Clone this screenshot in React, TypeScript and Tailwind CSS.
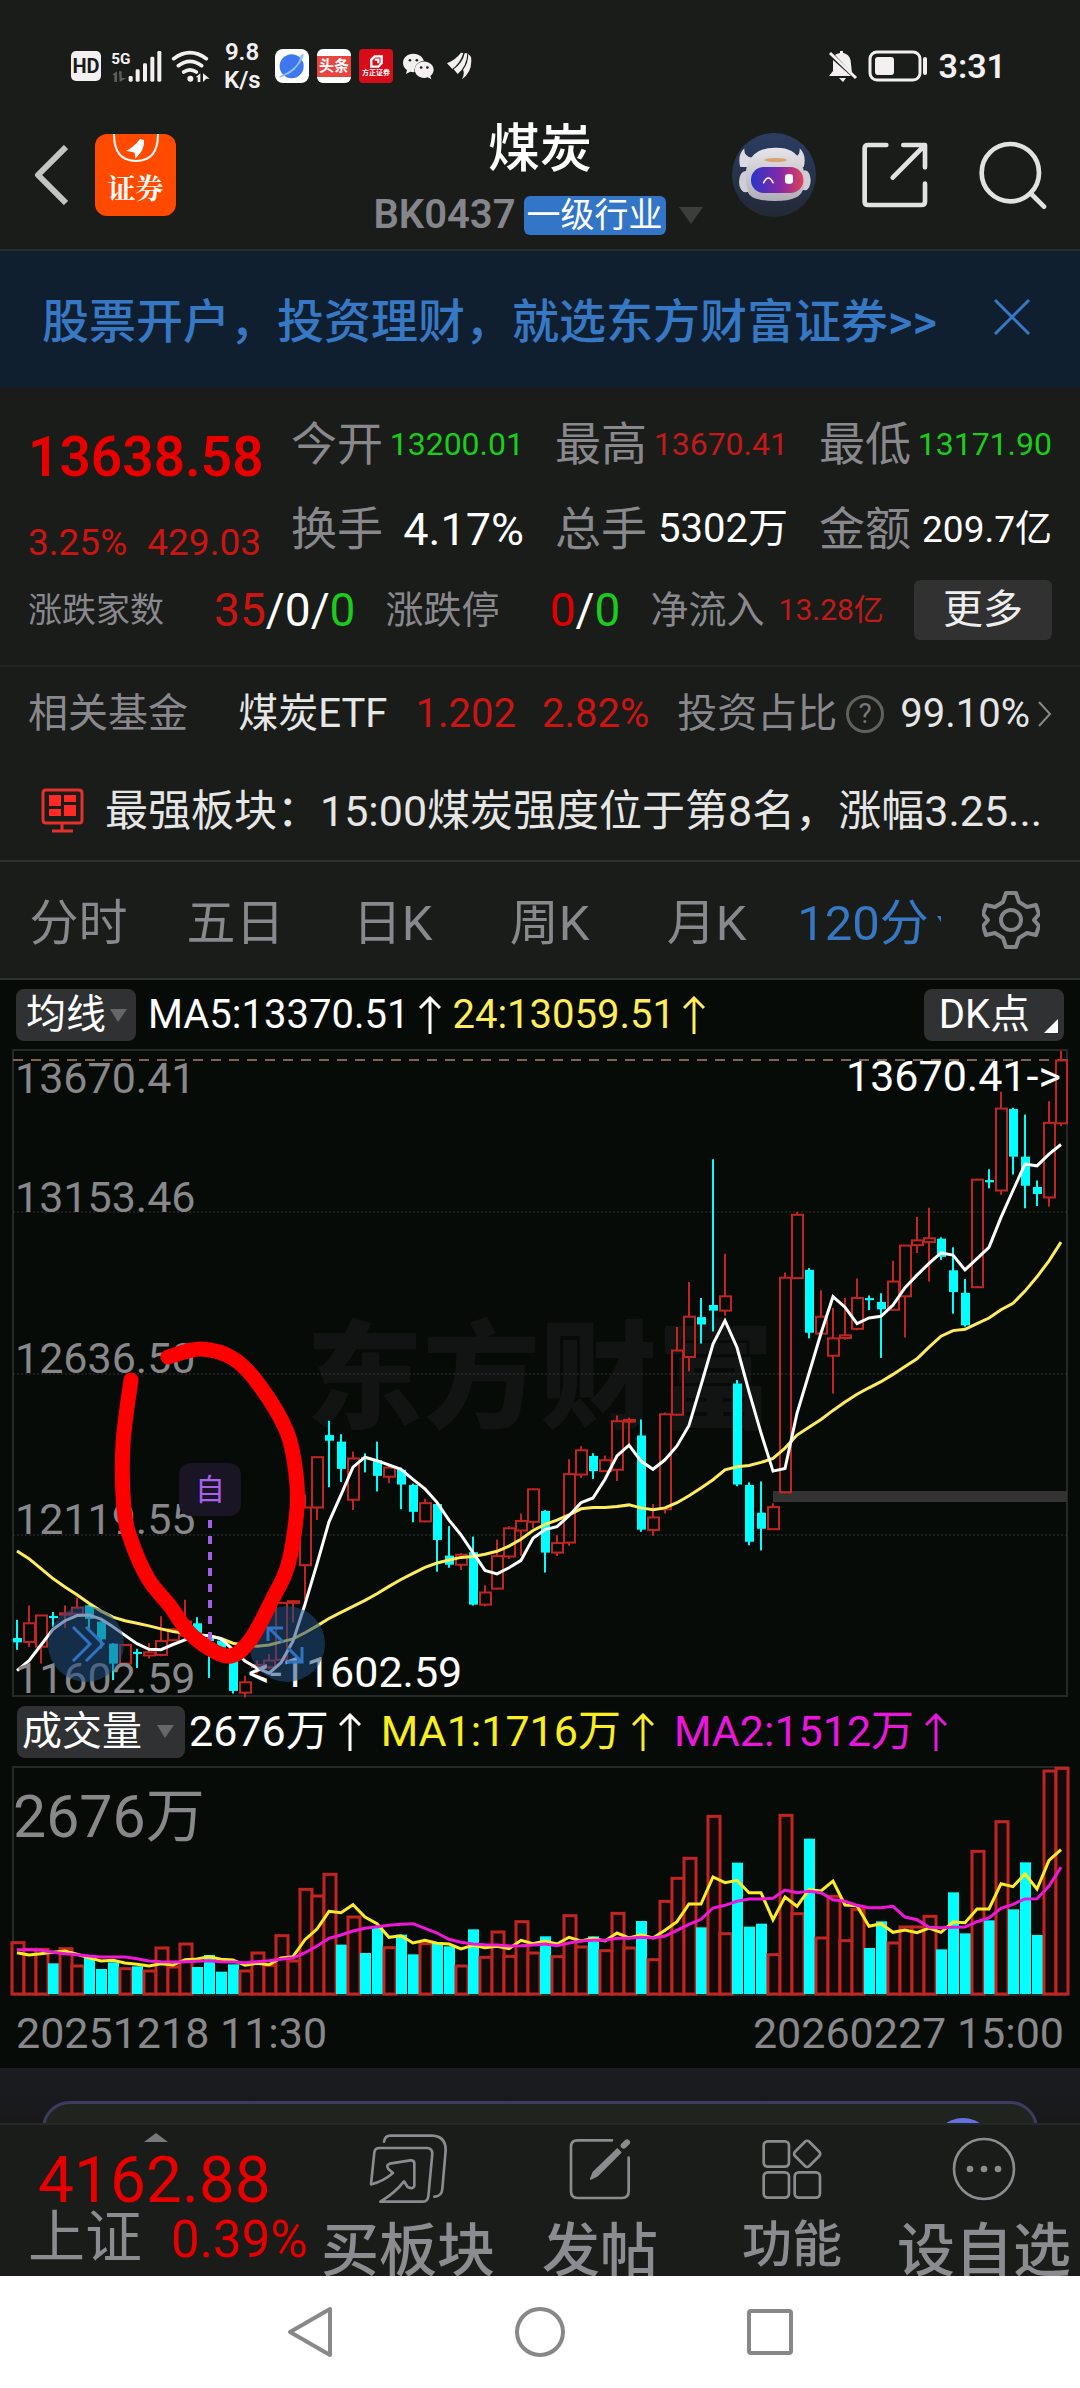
import React from "react";

type Candle = [0 | 1, number, number, number, number];

/* Each candle: rising flag, high, body top, body bottom, low (depth below the chart's top, in price ticks). */
const CANDLES: Candle[] = [
  [0, 1336, 1378, 1388, 1405], [1, 1303, 1344, 1387, 1398], [1, 1326, 1326, 1398, 1437], [0, 1318, 1327, 1332, 1352],
  [1, 1303, 1321, 1324, 1355], [1, 1285, 1308, 1322, 1325], [0, 1303, 1303, 1334, 1360], [0, 1340, 1340, 1381, 1402],
  [0, 1390, 1391, 1437, 1475], [1, 1393, 1394, 1437, 1437], [0, 1403, 1410, 1414, 1447], [1, 1390, 1411, 1418, 1425],
  [1, 1328, 1385, 1417, 1420], [1, 1355, 1358, 1383, 1385], [1, 1290, 1340, 1372, 1380], [0, 1330, 1344, 1366, 1370],
  [0, 1370, 1378, 1385, 1470], [0, 1380, 1384, 1400, 1405], [0, 1410, 1420, 1500, 1506], [1, 1465, 1480, 1504, 1515],
  [1, 1430, 1440, 1445, 1460], [1, 1415, 1430, 1445, 1450], [1, 1295, 1297, 1428, 1430], [1, 1292, 1293, 1297, 1342],
  [1, 1047, 1077, 1210, 1290], [1, 960, 961, 1077, 1106], [0, 877, 910, 923, 1030], [0, 908, 925, 988, 1018],
  [1, 948, 964, 1059, 1083], [0, 952, 961, 965, 996], [0, 925, 968, 1004, 1040], [1, 978, 985, 1006, 1021],
  [0, 985, 990, 1024, 1081], [0, 1022, 1025, 1087, 1111], [1, 1057, 1067, 1109, 1111], [0, 1066, 1069, 1152, 1225],
  [0, 1120, 1188, 1209, 1216], [1, 1182, 1186, 1209, 1221], [0, 1144, 1180, 1301, 1303], [1, 1256, 1273, 1301, 1305],
  [1, 1151, 1189, 1264, 1266], [1, 1120, 1125, 1190, 1196], [1, 1091, 1108, 1130, 1188], [1, 1033, 1035, 1110, 1125],
  [0, 1083, 1085, 1181, 1227], [1, 1141, 1159, 1181, 1189], [1, 966, 1000, 1158, 1165], [1, 936, 945, 1001, 1009],
  [0, 952, 958, 993, 1011], [1, 957, 968, 993, 995], [1, 865, 878, 990, 1016], [1, 870, 875, 879, 940],
  [0, 874, 911, 1128, 1133], [1, 1069, 1100, 1129, 1142], [1, 858, 862, 1081, 1091], [1, 661, 715, 863, 865],
  [1, 557, 637, 730, 763], [0, 594, 638, 655, 699], [0, 274, 610, 623, 671], [1, 492, 590, 623, 635],
  [0, 783, 791, 1024, 1028], [0, 1019, 1025, 1156, 1164], [0, 1017, 1089, 1126, 1176], [1, 1067, 1076, 1127, 1129],
  [1, 535, 547, 1042, 1044], [1, 395, 402, 548, 550], [0, 525, 529, 674, 687], [1, 576, 637, 676, 680],
  [1, 617, 687, 727, 814], [1, 594, 680, 686, 690], [1, 549, 594, 665, 668], [0, 588, 594, 599, 622],
  [0, 583, 603, 620, 732], [1, 508, 556, 621, 623], [1, 472, 473, 590, 685], [1, 407, 461, 472, 490],
  [1, 386, 456, 465, 556], [0, 454, 457, 499, 506], [0, 477, 530, 580, 630], [0, 550, 582, 657, 660],
  [1, 319, 321, 569, 571], [0, 297, 322, 327, 341], [1, 118, 157, 346, 356], [0, 155, 158, 268, 309],
  [0, 171, 268, 335, 387], [0, 323, 338, 354, 382], [1, 140, 190, 362, 383], [1, 24, 46, 191, 198],
];

const MA5 = [
  1453, 1430, 1394, 1358, 1338, 1326, 1325, 1334, 1352, 1372, 1391, 1404, 1405, 1393, 1382, 1372, 1372, 1380, 1405, 1431,
  1447, 1459, 1435, 1385, 1300, 1207, 1110, 1048, 984, 961, 969, 979, 989, 1012, 1034, 1065, 1106, 1140, 1181, 1222,
  1230, 1216, 1199, 1148, 1128, 1121, 1096, 1066, 1055, 1012, 958, 933, 970, 989, 967, 935, 888, 795, 700, 646,
  708, 810, 905, 993, 987, 860, 768, 675, 591, 615, 653, 640, 636, 610, 570, 541, 514, 490, 495, 529,
  503, 477, 408, 346, 285, 289, 262, 240,
];

const MA24 = [
  1177, 1195, 1218, 1241, 1260, 1278, 1298, 1316, 1330, 1338, 1344, 1350, 1357, 1363, 1367, 1370, 1373, 1379, 1390, 1395,
  1397, 1394, 1387, 1380, 1366, 1350, 1333, 1319, 1305, 1291, 1276, 1259, 1243, 1229, 1215, 1205, 1198, 1192, 1190, 1185,
  1178, 1166, 1150, 1130, 1116, 1106, 1094, 1080, 1077, 1077, 1075, 1071, 1078, 1082, 1078, 1066, 1050, 1032, 1013, 990,
  983, 980, 973, 964, 940, 910, 892, 874, 853, 834, 816, 801, 787, 770, 752, 734, 707, 682, 669, 666,
  653, 640, 621, 606, 578, 545, 508, 465,
];

/* Top of each volume bar, in thirds of a unit below the header. */
const VOLUME = [
  727, 747, 747, 789, 745, 797, 772, 806, 786, 805, 798, 812, 743, 800, 731, 800, 764, 814, 792, 812,
  758, 795, 706, 782, 567, 587, 522, 733, 650, 758, 680, 742, 703, 762, 730, 728, 738, 797, 687, 771,
  695, 768, 664, 758, 708, 769, 646, 740, 708, 751, 639, 743, 662, 778, 603, 534, 474, 681, 348, 700,
  487, 679, 670, 763, 345, 640, 415, 713, 588, 721, 627, 743, 663, 728, 680, 680, 648, 747, 576, 699,
  453, 660, 364, 627, 486, 704, 212, 204,
];
/* Bars drawn hollow although their candle is solid. */
const VOLUME_RISING = new Set([0, 26, 58]);

const VMA1 = [
  757, 764, 760, 756, 752, 762, 772, 782, 780, 788, 792, 797, 790, 794, 778, 776, 769, 777, 779, 795,
  789, 793, 773, 769, 718, 686, 633, 637, 613, 650, 670, 711, 706, 728, 720, 729, 731, 746, 735, 742,
  738, 745, 720, 730, 722, 731, 711, 722, 714, 722, 698, 713, 703, 713, 690, 664, 611, 611, 530, 547,
  540, 577, 577, 658, 590, 618, 568, 572, 542, 614, 616, 678, 670, 696, 689, 697, 683, 696, 665, 667,
  626, 626, 550, 559, 520, 566, 480, 448,
];

const VMA2 = [
  748, 748, 750, 756, 760, 763, 767, 770, 770, 770, 775, 782, 784, 785, 784, 783, 781, 784, 785, 787,
  784, 781, 777, 773, 757, 737, 714, 704, 692, 684, 679, 675, 672, 670, 684, 698, 717, 726, 731, 733,
  734, 737, 736, 734, 731, 736, 728, 722, 720, 720, 714, 714, 711, 713, 707, 690, 672, 657, 623, 615,
  603, 596, 596, 594, 569, 577, 573, 577, 598, 603, 615, 622, 622, 618, 650, 658, 681, 682, 681, 680,
  664, 653, 624, 612, 596, 595, 557, 501,
];

const FREEHAND: [number, number][] = [
  [155, 307], [188, 299], [221, 309], [247, 336], [274, 382], [283, 424], [284, 459], [275, 515], [259, 550], [238, 589],
  [218, 606], [194, 597], [174, 580], [157, 556], [136, 530], [119, 493], [111, 459], [110, 394], [118, 330],
];

const cx = (i: number) => 4 + i * 12;
const priceY = (v: number) => (v - 22) / 2.306;
const volumeY = (v: number) => (v - 200) / 3;
const line = (values: number[], toY: (v: number) => number) =>
  values.map((v, i) => `${cx(i)},${toY(v).toFixed(1)}`).join(" ");

function smooth(p: [number, number][]) {
  let d = `M${p[0][0]} ${p[0][1]}`;
  for (let i = 0; i < p.length - 1; i++) {
    const a = p[Math.max(0, i - 1)];
    const b = p[i];
    const c = p[i + 1];
    const e = p[Math.min(p.length - 1, i + 2)];
    d += ` C${b[0] + (c[0] - a[0]) / 6} ${b[1] + (c[1] - a[1]) / 6} ${c[0] - (e[0] - b[0]) / 6} ${c[1] - (e[1] - b[1]) / 6} ${c[0]} ${c[1]}`;
  }
  return d;
}

const RED = "#c22420";
const CYAN = "#00ffff";

function StatusBar() {
  return (
    <div className="flex h-[120px] items-center pt-3 pr-[74px] pl-[71px] text-[#f4f0f2]">
      <span className="flex size-[30px] items-center justify-center rounded-[5px] bg-[#f4f0f2] text-[20px] leading-none font-bold text-[#191c19]">HD</span>
      <svg className="ml-[10px] h-8 w-[51px]" viewBox="153 56 153 96" fill="currentColor">
        <text x="154" y="99" fontSize="46" fontWeight="700">5G</text>
        <path d="M157 130l14-10v32h-8v-20zM177 120h8v20h14l-20 12z" fill="#5b5d5b" />
        <rect x="206" y="134" width="12" height="17" rx="4" />
        <rect x="227" y="114" width="12" height="37" rx="4" />
        <rect x="249" y="96" width="12" height="55" rx="4" />
        <rect x="271" y="76" width="12" height="75" rx="4" />
        <rect x="292" y="59" width="12" height="92" rx="4" />
      </svg>
      <svg className="ml-[9px] h-8 w-[39px]" viewBox="330 56 117 96" fill="none" stroke="currentColor" strokeWidth="11" strokeLinecap="round">
        <path d="M338 82q49-36 98 0M352 103q35-26 70 0M368 122q19-13 38 0" />
        <circle cx="388" cy="142" r="9" fill="currentColor" stroke="none" />
        <path d="M404 138l14-12v26h-8v-14zM426 126l20 16h-10l-10 10z" fill="currentColor" stroke="none" />
      </svg>
      <span className="ml-[14px] w-[36px] text-center text-[24px] leading-[28px] font-semibold">9.8 K/s</span>
      <svg className="ml-[15px] size-[34px]" viewBox="0 0 102 102">
        <rect width="102" height="102" rx="24" fill="#fff" />
        <circle cx="50" cy="52" r="36" fill="#3f78ee" />
        <path d="M16 80Q8 88 20 84Q64 70 84 26Q90 8 76 20Q72 56 16 80z" fill="#8fc1fb" />
      </svg>
      <span className="ml-2 flex size-[34px] flex-col justify-center overflow-hidden rounded-[6px] bg-white">
        <span className="bg-[#e8453f] text-center text-[15px] leading-[21px] font-bold text-white">头条</span>
      </span>
      <span className="ml-2 flex size-[34px] flex-col items-center justify-end rounded-[4px] bg-[#d70c19] pb-1">
        <svg className="h-[13px] w-[13px]" viewBox="0 0 39 39" fill="none" stroke="#fff" strokeWidth="7">
          <path d="M4 14L14 4h21v20L25 35H4zM14 14h11v11" />
        </svg>
        <span className="text-[7px] leading-[11px] font-bold whitespace-nowrap text-white">方正证券</span>
      </span>
      <svg className="ml-[10px] h-[27px] w-[31px]" viewBox="1028 66 94 82" fill="currentColor">
        <path d="M1059 68c-18 0-31 12-31 28 0 9 5 17 12 22l-3 12 13-7c5 1 9 2 13 1-2-20 11-33 28-34-3-13-16-22-32-22z" />
        <path d="M1092 92c-16 0-28 11-28 25s12 25 28 25c4 0 8-1 11-2l11 6-3-10c6-5 10-11 10-19 0-14-13-25-29-25z" />
        <g fill="#191c19"><circle cx="1049" cy="88" r="4" /><circle cx="1070" cy="88" r="4" /><circle cx="1083" cy="110" r="4" /><circle cx="1102" cy="110" r="4" /></g>
      </svg>
      <svg className="ml-[13px] h-[28px] w-[25px]" viewBox="1164 65 75 84" fill="currentColor">
        <path d="M1164 99Q1190 88 1206 67L1213 68Q1204 98 1180 116zM1184 117Q1211 98 1217 69L1225 69Q1224 108 1196 131zM1209 147Q1218 128 1212 119Q1228 98 1228 70L1236 80Q1242 122 1209 147z" />
      </svg>
      <svg className="ml-auto size-[32px]" viewBox="0 0 32 32" fill="currentColor">
        <path d="M8 5Q9 4 13 3V1h3v2c6 1 8 6 8 11l1 9zM6 10l18 16H2l4-5zM12 28h7l-3 4z" />
        <path d="M3 3l26 25" stroke="currentColor" strokeWidth="3" />
      </svg>
      <svg className="ml-[9px] h-8 w-[60px]" viewBox="0 0 60 32" fill="none" stroke="currentColor" strokeWidth="3">
        <rect x="2" y="2" width="50" height="28" rx="7" />
        <rect x="7" y="7" width="19" height="18" rx="3" fill="currentColor" stroke="none" />
        <path d="M57 9v14" strokeLinecap="round" strokeWidth="4" />
      </svg>
      <span className="ml-[10px] text-[34px] leading-none font-semibold">3:31</span>
    </div>
  );
}

function Robot() {
  return (
    <svg className="size-[84px]" viewBox="39 38 252 252">
      <defs>
        <linearGradient id="night" x1="0" y1="0" x2="0" y2="1"><stop offset="0" stopColor="#2b3d63" /><stop offset="1" stopColor="#222935" /></linearGradient>
        <linearGradient id="visor" x1="0" y1="0" x2="1" y2="0"><stop offset="0" stopColor="#2b35c8" /><stop offset="0.55" stopColor="#8428a6" /><stop offset="1" stopColor="#e0405c" /></linearGradient>
        <linearGradient id="shell" x1="0" y1="0" x2="0" y2="1"><stop offset="0" stopColor="#e6e5e9" /><stop offset="1" stopColor="#b0adb6" /></linearGradient>
      </defs>
      <circle cx="165" cy="164" r="126" fill="url(#night)" />
      <path d="M76 84Q54 106 64 140L86 140L98 112Q74 108 76 84zM242 84Q264 106 254 140L234 140L222 112Q244 108 242 84z" fill="#dcdae1" />
      <ellipse cx="80" cy="184" rx="20" ry="32" fill="#cfcdd5" />
      <ellipse cx="258" cy="180" rx="17" ry="30" fill="#cfcdd5" />
      <path d="M86 130Q106 82 168 82Q226 80 244 122Q262 156 254 200Q250 242 168 242Q92 242 86 212Q74 160 86 130z" fill="url(#shell)" />
      <rect x="96" y="140" width="157" height="78" rx="38" fill="url(#visor)" />
      <path d="M134 187q14-28 28 0" fill="none" stroke="#fff" strokeWidth="5" strokeLinecap="round" />
      <rect x="198" y="162" width="24" height="28" rx="7" fill="#fff" />
      <ellipse cx="170" cy="119" rx="34" ry="6" fill="#d9a270" />
    </svg>
  );
}

function Header() {
  return (
    <header className="grid h-[131px] grid-cols-[1fr_auto_1fr] border-b-2 border-[#273131]">
      <div className="flex items-center pb-5 pl-[34px]">
        <button aria-label="返回" className="h-[60px] w-[34px]">
          <svg viewBox="0 0 34 60" fill="none" stroke="#c4c4c4" strokeWidth="6" strokeLinejoin="round"><path d="M32 2L4 30l28 28" /></svg>
        </button>
        <button className="ml-[27px] flex h-[82px] w-[81px] flex-col items-center rounded-[12px] bg-[#ff4a00] text-white">
          <svg className="h-[36px] w-[46px]" viewBox="0 0 46 36" fill="none" stroke="#fff" strokeWidth="2">
            <path d="M1 0Q1 27 23 27Q45 27 45 0" />
            <path d="M13 17Q21 13 27 5L31 6Q32 16 22 25Q23 19 20 18z" fill="#fff" stroke="none" />
          </svg>
          <span className="font-['Noto_Serif_CJK_SC','Noto_Sans_CJK_SC',sans-serif] text-[28px] leading-[34px] font-bold">证券</span>
        </button>
      </div>
      <div className="flex flex-col items-center">
        <h1 className="text-[52px] leading-[59px] font-medium text-white">煤炭</h1>
        <button className="flex items-center pt-4 pr-1">
          <span className="text-[40px] leading-[40px] font-semibold text-[#85858c]">BK0437</span>
          <span className="ml-2 rounded-[6px] bg-[#3375c6] px-[3px] text-[34px] leading-[39px] text-white">一级行业</span>
          <svg className="ml-[13px] h-[17px] w-6" viewBox="0 0 24 17" fill="#3c3e3d"><path d="M0 0h24L12 17z" /></svg>
        </button>
      </div>
      <div className="flex items-center justify-end pr-[33px] pb-5">
        <button aria-label="助手" className="mr-[46px]"><Robot /></button>
        <button aria-label="分享" className="mr-[51px]">
          <svg className="size-[66px]" viewBox="430 65 198 198" fill="none" stroke="#e2e2e2" strokeWidth="14" strokeLinecap="round" strokeLinejoin="round">
            <path d="M503 74H448Q438 74 438 84V244Q438 254 448 254H608Q619 254 619 244V190M554 74H619V141M616 77L522 172" />
          </svg>
        </button>
        <button aria-label="搜索">
          <svg className="size-[68px]" viewBox="778 59 204 204" fill="none" stroke="#e2e2e2" strokeWidth="14" strokeLinecap="round">
            <circle cx="872" cy="154" r="86" /><path d="M935 218L973 256" />
          </svg>
        </button>
      </div>
    </header>
  );
}

function Banner() {
  return (
    <div className="flex h-[136px] items-center justify-between bg-[#101f30] pr-[49px] pl-[42px] text-[#3778c4]">
      <a href="#open" className="pt-1 text-[47px] leading-none font-medium whitespace-nowrap">股票开户，投资理财，就选东方财富证券&gt;&gt;</a>
      <button aria-label="关闭" className="pb-1">
        <svg className="size-[38px]" viewBox="0 0 38 38" stroke="currentColor" strokeWidth="3"><path d="M2 2l34 34M36 2L2 36" /></svg>
      </button>
    </div>
  );
}

function Cell({ label, value, className }: { label: string; value: string; className: string }) {
  return (
    <div className="flex items-center justify-between">
      <span className="text-[46px] leading-none text-[#88888d]">{label}</span>
      <span className={className}>{value}</span>
    </div>
  );
}

function Quote() {
  return (
    <section className="border-b-2 border-[#222624] pr-[28px] pb-4 pl-[28px]">
      <div className="flex">
        <div className="w-[263px]">
          <div className="flex h-[140px] items-center text-[55px] leading-none font-semibold text-[#e80000]">13638.58</div>
          <div className="flex h-[30px] items-center gap-5 text-[37px] leading-none text-[#cb1513]"><span>3.25%</span><span>429.03</span></div>
        </div>
        <div className="grid flex-1 grid-cols-3 grid-rows-[86px_84px] gap-x-[31px] pt-[14px]">
          <Cell label="今开" value="13200.01" className="text-[32px] text-[#1ccb1c]" />
          <Cell label="最高" value="13670.41" className="text-[32px] text-[#c21a18]" />
          <Cell label="最低" value="13171.90" className="text-[32px] text-[#1ccb1c]" />
          <Cell label="换手" value="4.17%" className="text-[45px] leading-none text-white" />
          <Cell label="总手" value="5302万" className="text-[40px] leading-none text-white" />
          <Cell label="金额" value="209.7亿" className="text-[37px] leading-none text-white" />
        </div>
      </div>
      <div className="flex h-[78px] items-center justify-between leading-none text-[#88888d]">
        <span className="text-[34px]">涨跌家数</span>
        <span className="ml-5 text-[46px] text-white"><span className="text-[#cb1513]">35</span>/0/<span className="text-[#1ccb1c]">0</span></span>
        <span className="text-[38px]">涨跌停</span>
        <span className="ml-5 text-[46px] text-white"><span className="text-[#e00000]">0</span>/<span className="text-[#1ccb1c]">0</span></span>
        <span className="text-[38px]">净流入</span>
        <span className="-ml-4 text-[30px] text-[#c21a18]">13.28亿</span>
        <button className="rounded-[6px] bg-[#303130] px-[29px] text-[40px] leading-[60px] text-[#eee]">更多</button>
      </div>
    </section>
  );
}

function Related() {
  return (
    <section className="border-b-2 border-[#2d312f]">
      <div className="flex h-[94px] items-center pr-[28px] pl-[28px] text-[40px] leading-none text-[#e6e6e6]">
        <span className="text-[#88888d]">相关基金</span>
        <span className="ml-auto">煤炭ETF</span>
        <span className="ml-[28px] text-[#cb1513]">1.202</span>
        <span className="ml-[26px] text-[#cb1513]">2.82%</span>
        <span className="ml-[28px] text-[#88888d]">投资占比</span>
        <button aria-label="说明" className="ml-[9px] flex size-[38px] items-center justify-center rounded-full border-3 border-[#5f615f] text-[28px] leading-none text-[#77797a]">?</button>
        <span className="ml-[16px]">99.10%</span>
        <svg className="ml-[8px] h-[26px] w-[14px]" viewBox="0 0 14 26" fill="none" stroke="#88888d" strokeWidth="2"><path d="M1 1l11 12L1 25" /></svg>
      </div>
      <a href="#sector" className="flex h-[99px] items-center pl-[41px] text-[43px] text-[#e6e6e6]">
        <svg className="h-[45px] w-[43px] shrink-0" viewBox="0 0 43 45" fill="none" stroke="#e3312c" strokeWidth="3">
          <path d="M5 2h33q3 0 3 3v27q0 3-3 3H5q-3 0-3-3V5q0-3 3-3zM21 35v8M11 43h21" />
          <path d="M8 7h12v11H8zM23 7h12v7H23zM8 21h12v7H8zM23 17h12v11H23z" fill="#ff2a24" stroke="none" />
        </svg>
        <span className="ml-[21px] leading-[60px] whitespace-nowrap">最强板块：15:00煤炭强度位于第8名，涨幅3.25...</span>
      </a>
    </section>
  );
}

function Tabs() {
  const tabs = ["分时", "五日", "日K", "周K", "月K"];
  return (
    <nav className="flex h-[118px] items-center border-b-2 border-[#2d312f] pr-[40px] text-[49px] leading-none text-[#88888d]">
      <div className="grid flex-1 grid-cols-6 pt-[6px]">
        {tabs.map((t) => <button key={t}>{t}</button>)}
        <button className="flex items-center justify-center pl-3 text-[#3778c4]">120分
          <svg className="mb-2 ml-2 h-[6px] w-[5px] shrink-0" viewBox="0 0 5 6" fill="currentColor"><path d="M0 0h4v6z" /></svg>
        </button>
      </div>
      <button aria-label="设置" className="ml-[40px]">
        <svg className="size-[58px]" viewBox="0 0 58 58" fill="none" stroke="#85858a" strokeWidth="4" strokeLinejoin="round">
          <path d="M24 2h10l3 9l8 5l9-2l3 9l-5 6l5 6l-3 9l-9-2l-8 5l-3 9H24l-3-9l-8-5l-9 2l-3-9l5-6l-5-6l3-9l9 2l8-5z" />
          <circle cx="29" cy="29" r="10" />
        </svg>
      </button>
    </nav>
  );
}

function Up() {
  return (
    <svg className="h-[38px] w-[22px]" viewBox="0 0 22 38" fill="none" stroke="currentColor" strokeWidth="3"><path d="M11 38V2M1 12L11 2l10 10" /></svg>
  );
}

function PriceChart() {
  return (
    <svg className="block h-auto w-full overflow-visible" viewBox="0 0 1054 646" fontSize="43">
      <rect x="0" y="0" width="1054" height="646" fill="none" stroke="#252927" strokeWidth="2" />
      <text x="293" y="369" fontSize="117" fontWeight="900" fill="#111412">东方财富</text>
      {[162, 324, 485].map((y) => <path key={y} d={`M0 ${y}H1054`} stroke="#343735" strokeDasharray="2 2" />)}
      <path d="M0 10H1054" stroke="#82634f" strokeWidth="2" strokeDasharray="10 8" />
      <rect x="760" y="441" width="294" height="11" fill="#323332" />
      {CANDLES.map(([up, high, top, bottom, low], i) => {
        const x = cx(i);
        const y1 = priceY(top);
        const y2 = priceY(bottom);
        return up ? (
          <g key={i} stroke={RED} strokeWidth="2" fill="none">
            <path d={`M${x} ${priceY(high)}V${y1}M${x} ${y2}V${priceY(low)}`} />
            <rect x={x - 5} y={y1} width="11" height={Math.max(1, y2 - y1)} />
          </g>
        ) : (
          <g key={i} fill={CYAN}>
            <rect x={x - 1} y={priceY(high)} width="2" height={priceY(low) - priceY(high)} />
            <rect x={x - 4} y={y1} width="9" height={Math.max(2, y2 - y1)} />
          </g>
        );
      })}
      <polyline points={line(MA24, priceY)} fill="none" stroke="#ffec5c" strokeWidth="3" />
      <polyline points={line(MA5, priceY)} fill="none" stroke="#fff" strokeWidth="3" />
      <g fill="#88888b">
        <text x="2" y="43">13670.41</text>
        <text x="2" y="162">13153.46</text>
        <text x="2" y="323">12636.50</text>
        <text x="2" y="484">12119.55</text>
        <text x="2" y="643">11602.59</text>
      </g>
      <text x="833" y="41" fill="#fff">13670.41-&gt;</text>
      <text x="235" y="637" fill="#fff">&lt;-11602.59</text>
      <g fill="#1f4a80" fillOpacity="0.55"><circle cx="73" cy="594" r="38" /><circle cx="274" cy="594" r="38" /></g>
      <g fill="none" stroke="#2f74c2" strokeWidth="3">
        <path d="M60 577l17 17l-17 17M73 577l17 17l-17 17" />
        <path d="M255 591V578H270M256 578L270 592M289 597V612H274M289 612L275 598" />
      </g>
      <rect x="166" y="413" width="62" height="53" rx="12" fill="#1a1524" />
      <text x="182" y="450" fontSize="30" fill="#a860ee">自</text>
      <path d="M197 470V590" stroke="#a05fe0" strokeWidth="4" strokeDasharray="8 8" />
      <path d={smooth(FREEHAND)} fill="none" stroke="#ff0000" strokeWidth="15" strokeLinecap="round" strokeLinejoin="round" />
    </svg>
  );
}

function VolumeChart() {
  return (
    <svg className="block h-auto w-full overflow-visible" viewBox="0 0 1054 228">
      <rect x="0" y="0" width="1054" height="228" fill="none" stroke="#252927" strokeWidth="2" />
      <text x="0" y="70" fontSize="59" fill="#88888b">2676万</text>
      {VOLUME.map((v, i) => {
        const y = volumeY(v);
        return CANDLES[i][0] || VOLUME_RISING.has(i) ? (
          <rect key={i} x={cx(i) - 5} y={y} width="12" height={227 - y} fill="#120a08" stroke={RED} strokeWidth="3" />
        ) : (
          <rect key={i} x={cx(i) - 5} y={y} width="11" height={227 - y} fill={CYAN} />
        );
      })}
      <polyline points={line(VMA1, volumeY)} fill="none" stroke="#fdec24" strokeWidth="3" />
      <polyline points={line(VMA2, volumeY)} fill="none" stroke="#ee17d8" strokeWidth="3" />
    </svg>
  );
}

function Charts() {
  return (
    <section className="bg-[#070b08]">
      <div className="flex h-[70px] items-center pr-[16px] pl-[16px] text-[40px] leading-none whitespace-nowrap text-white">
        <button className="flex items-center rounded-[8px] bg-[#303132] pr-[9px] pl-[10px] leading-[52px]">均线
          <svg className="ml-[4px] h-[13px] w-[17px]" viewBox="0 0 17 13" fill="#646866"><path d="M0 0h17L8 13z" /></svg>
        </button>
        <span className="mr-[10px] ml-[12px]">MA5:13370.51</span><Up />
        <span className="mr-[8px] ml-[11px] text-[#ffec5c]">24:13059.51</span><span className="text-[#ffec5c]"><Up /></span>
        <button className="ml-auto flex items-end rounded-[8px] bg-[#303132] pr-[6px] pl-[15px] leading-[52px]">DK点
          <svg className="mb-[8px] ml-[14px] size-[14px]" viewBox="0 0 14 14" fill="#fff"><path d="M14 0v14H0z" /></svg>
        </button>
      </div>
      <div className="px-[13px]"><PriceChart /></div>
      <div className="flex h-[71px] items-center pr-[16px] pl-[17px] text-[43px] leading-none whitespace-nowrap text-white">
        <button className="flex items-center rounded-[8px] bg-[#303132] pr-[11px] pl-[5px] text-[40px] leading-[52px]">成交量
          <svg className="ml-[15px] h-[13px] w-[17px]" viewBox="0 0 17 13" fill="#646866"><path d="M0 0h17L8 13z" /></svg>
        </button>
        <span className="mr-[10px] ml-[4px]">2676万</span><Up />
        <span className="mr-[11px] ml-[20px] text-[#f8ee20]">MA1:1716万</span><span className="text-[#f8ee20]"><Up /></span>
        <span className="mr-[11px] ml-[20px] text-[#ea16dd]">MA2:1512万</span><span className="text-[#ea16dd]"><Up /></span>
      </div>
      <div className="px-[13px]"><VolumeChart /></div>
      <div className="flex h-[73px] items-center justify-between px-[16px] pt-1 text-[43px] leading-none text-[#88888b]">
        <time>20251218 11:30</time><time>20260227 15:00</time>
      </div>
    </section>
  );
}

function BottomBar() {
  const stroke = { fill: "none", stroke: "#8b8b90", strokeWidth: 8, strokeLinejoin: "round" as const, strokeLinecap: "round" as const };
  return (
    <nav className="flex h-[153px] items-start overflow-hidden border-t-2 border-[#242826] bg-[#191c19] whitespace-nowrap text-[#8b8b90]">
      <button className="w-[312px] shrink-0 text-left">
        <svg className="mt-[8px] ml-[144px] h-[9px] w-6" viewBox="0 0 24 9" fill="#77797a"><path d="M12 0l12 9H0z" /></svg>
        <span className="block pt-[7px] pl-[38px] text-[64px] leading-[64px] text-[#e60000]">4162.88</span>
        <span className="flex items-baseline pl-[28px] text-[57px] leading-[50px]">上证<span className="ml-[29px] text-[51px] text-[#e60000]">0.39%</span></span>
      </button>
      <button className="flex flex-1 flex-col items-center font-medium">
        <span className="flex h-[88px] items-center">
          <svg className="h-[72px] w-20" viewBox="75 38 240 216" {...stroke}>
            <path d="M123 64Q126 46 142 46H268Q308 48 308 90L298 206Q296 228 274 229" />
            <path d="M84 192L94 96Q96 83 110 83H252Q268 84 268 100L256 228Q254 244 240 244H112Q156 218 183 183L194 200Q212 208 214 196V128Q213 119 202 120L140 130Q128 134 136 146L150 158Q120 184 84 192z" />
          </svg>
        </span>
        <span className="text-[58px] leading-[76px]">买板块</span>
      </button>
      <button className="flex flex-1 flex-col items-center font-medium">
        <span className="flex h-[88px] items-center">
          <svg className="size-16" viewBox="680 46 192 192" {...stroke}>
            <path d="M812 56H708Q689 56 689 76V208Q689 229 708 229H842Q862 229 862 208V108" />
            <path d="M828 82L838 92L768 162L748 172L756 152z" fill="#8b8b90" strokeWidth="5" />
            <path d="M847 72L857 62" strokeWidth="18" />
          </svg>
        </span>
        <span className="text-[58px] leading-[76px]">发帖</span>
      </button>
      <button className="flex flex-1 flex-col items-center font-medium">
        <span className="flex h-[88px] items-center">
          <svg className="size-[62px]" viewBox="1260 50 184 184" {...stroke}>
            <rect x="1268" y="60" width="75" height="75" rx="12" /><rect x="1268" y="152" width="75" height="75" rx="12" />
            <rect x="1360" y="152" width="75" height="75" rx="12" /><rect x="1367" y="67" width="60" height="60" rx="9" transform="rotate(45 1397 97)" />
          </svg>
        </span>
        <span className="text-[50px] leading-[64px]">功能</span>
      </button>
      <button className="flex flex-1 flex-col items-center font-medium">
        <span className="flex h-[88px] items-center">
          <svg className="size-16" viewBox="0 0 192 192" {...stroke}>
            <circle cx="96" cy="96" r="90" /><g fill="#8b8b90" stroke="none"><circle cx="54" cy="96" r="10" /><circle cx="96" cy="96" r="10" /><circle cx="138" cy="96" r="10" /></g>
          </svg>
        </span>
        <span className="text-[58px] leading-[76px]">设自选</span>
      </button>
    </nav>
  );
}

function SystemNav() {
  return (
    <nav className="flex h-[112px] items-center justify-center gap-[181px] bg-white">
      <button aria-label="后退"><svg className="h-[52px] w-[46px]" viewBox="0 0 46 52" fill="none" stroke="#888" strokeWidth="4" strokeLinejoin="round"><path d="M43 3v46L3 26z" /></svg></button>
      <button aria-label="主屏幕"><svg className="size-[52px]" viewBox="0 0 52 52" fill="none" stroke="#888" strokeWidth="4"><circle cx="26" cy="26" r="23" /></svg></button>
      <button aria-label="最近任务"><svg className="size-[46px]" viewBox="0 0 46 46" fill="none" stroke="#888" strokeWidth="4"><rect x="2" y="2" width="42" height="42" rx="2" /></svg></button>
    </nav>
  );
}

export default function App() {
  return (
    <div className="w-full bg-[#191c19] font-[Roboto,'Noto_Sans_CJK_SC',sans-serif]" lang="zh-CN">
      <StatusBar />
      <Header />
      <Banner />
      <Quote />
      <Related />
      <Tabs />
      <Charts />
      <div className="h-[55px] overflow-hidden bg-linear-to-b from-[#1b1d22] to-[#18181a] px-[42px] pt-[33px]">
        <div className="flex h-20 justify-end rounded-[28px] border-3 border-[#3e3b62] bg-[#20241f] pt-[14px] pr-[42px]">
          <span className="size-[60px] rounded-full bg-[#6670e0]" />
        </div>
      </div>
      <BottomBar />
      <SystemNav />
    </div>
  );
}
